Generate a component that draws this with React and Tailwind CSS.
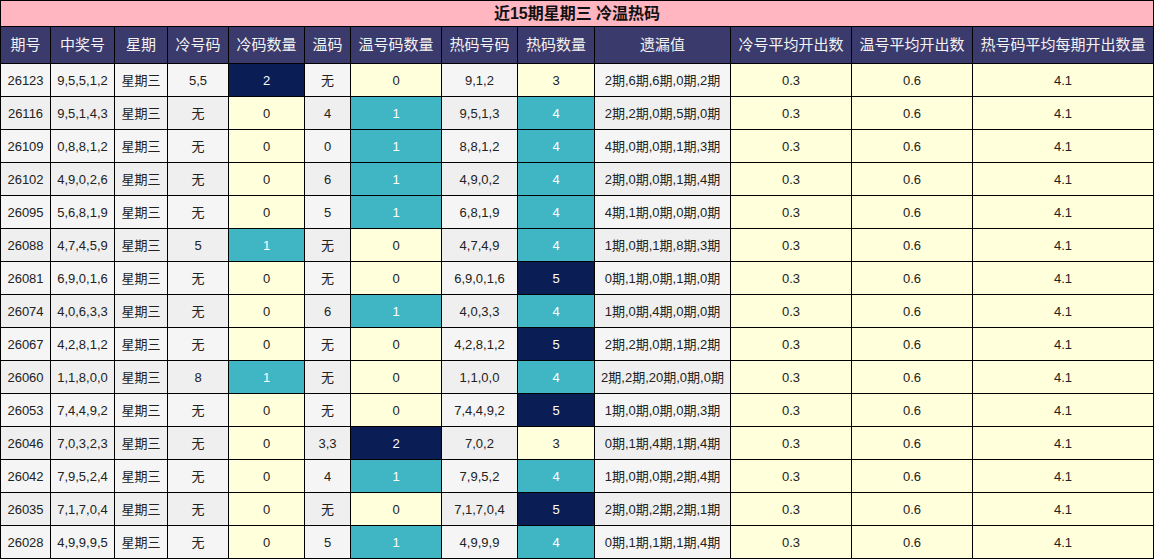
import React from "react";

const headers = [
  "期号", "中奖号", "星期", "冷号码", "冷码数量", "温码", "温号码数量",
  "热码号码", "热码数量", "遗漏值", "冷号平均开出数", "温号平均开出数", "热号码平均每期开出数量",
];

const rows = [
  ["26123", "9,5,5,1,2", "5,5", 2, "无", 0, "9,1,2", 3, "2期,6期,6期,0期,2期"],
  ["26116", "9,5,1,4,3", "无", 0, "4", 1, "9,5,1,3", 4, "2期,2期,0期,5期,0期"],
  ["26109", "0,8,8,1,2", "无", 0, "0", 1, "8,8,1,2", 4, "4期,0期,0期,1期,3期"],
  ["26102", "4,9,0,2,6", "无", 0, "6", 1, "4,9,0,2", 4, "2期,0期,0期,1期,4期"],
  ["26095", "5,6,8,1,9", "无", 0, "5", 1, "6,8,1,9", 4, "4期,1期,0期,0期,0期"],
  ["26088", "4,7,4,5,9", "5", 1, "无", 0, "4,7,4,9", 4, "1期,0期,1期,8期,3期"],
  ["26081", "6,9,0,1,6", "无", 0, "无", 0, "6,9,0,1,6", 5, "0期,1期,0期,1期,0期"],
  ["26074", "4,0,6,3,3", "无", 0, "6", 1, "4,0,3,3", 4, "1期,0期,4期,0期,0期"],
  ["26067", "4,2,8,1,2", "无", 0, "无", 0, "4,2,8,1,2", 5, "2期,2期,0期,1期,2期"],
  ["26060", "1,1,8,0,0", "8", 1, "无", 0, "1,1,0,0", 4, "2期,2期,20期,0期,0期"],
  ["26053", "7,4,4,9,2", "无", 0, "无", 0, "7,4,4,9,2", 5, "1期,0期,0期,0期,3期"],
  ["26046", "7,0,3,2,3", "无", 0, "3,3", 2, "7,0,2", 3, "0期,1期,4期,1期,4期"],
  ["26042", "7,9,5,2,4", "无", 0, "4", 1, "7,9,5,2", 4, "1期,0期,0期,2期,4期"],
  ["26035", "7,1,7,0,4", "无", 0, "无", 0, "7,1,7,0,4", 5, "2期,0期,2期,2期,1期"],
  ["26028", "4,9,9,9,5", "无", 0, "5", 1, "4,9,9,9", 4, "0期,1期,1期,1期,4期"],
];

// level 0 = yellow, 1 = teal, 2 = navy
const levelClass = [
  "bg-[#ffffdc] text-[#222]",
  "bg-[#40b5c4] text-white",
  "bg-[#0a1d55] text-white",
];

function Cell({ className = "", children }) {
  return (
    <div className={`flex items-center justify-center border-r border-b border-black whitespace-nowrap ${className}`}>
      {children}
    </div>
  );
}

export default function App() {
  return (
    <div className="w-[1154px] bg-white font-['Liberation_Sans','Noto_Sans_CJK_SC',sans-serif]">
      <div className="grid grid-cols-[50px_64px_53px_61px_76px_46px_91px_76px_77px_136px_121px_121px_181px] grid-rows-[26px_37px_repeat(15,33px)] border-l border-t border-black">
        {/* Title */}
        <Cell className="col-span-13 bg-[#ffb6c1] text-[16px] font-bold text-[#111]">
          近15期星期三 冷温热码
        </Cell>

        {/* Header */}
        {headers.map((h) => (
          <Cell key={h} className="bg-[#3b3a6c] text-[15px] text-[#f2f2f2]">
            {h}
          </Cell>
        ))}

        {/* Rows */}
        {rows.map((r, i) => {
          const stripe = i % 2 === 0 ? "bg-[#f5f5f5]" : "bg-[#efefef]";
          const plain = `${stripe} pt-[2px] text-[13px] text-[#222]`;
          const num = "pt-[2px] text-[13px]";
          return (
            <React.Fragment key={r[0]}>
              <Cell className={plain}>{r[0]}</Cell>
              <Cell className={plain}>{r[1]}</Cell>
              <Cell className={plain}>星期三</Cell>
              <Cell className={plain}>{r[2]}</Cell>
              <Cell className={`${levelClass[r[3]]} ${num}`}>{r[3]}</Cell>
              <Cell className={plain}>{r[4]}</Cell>
              <Cell className={`${levelClass[r[5]]} ${num}`}>{r[5]}</Cell>
              <Cell className={plain}>{r[6]}</Cell>
              <Cell className={`${levelClass[r[7] - 3]} ${num}`}>{r[7]}</Cell>
              <Cell className={plain}>{r[8]}</Cell>
              <Cell className={`bg-[#ffffdc] text-[#222] ${num}`}>0.3</Cell>
              <Cell className={`bg-[#ffffdc] text-[#222] ${num}`}>0.6</Cell>
              <Cell className={`bg-[#ffffdc] text-[#222] ${num}`}>4.1</Cell>
            </React.Fragment>
          );
        })}
      </div>
    </div>
  );
}
